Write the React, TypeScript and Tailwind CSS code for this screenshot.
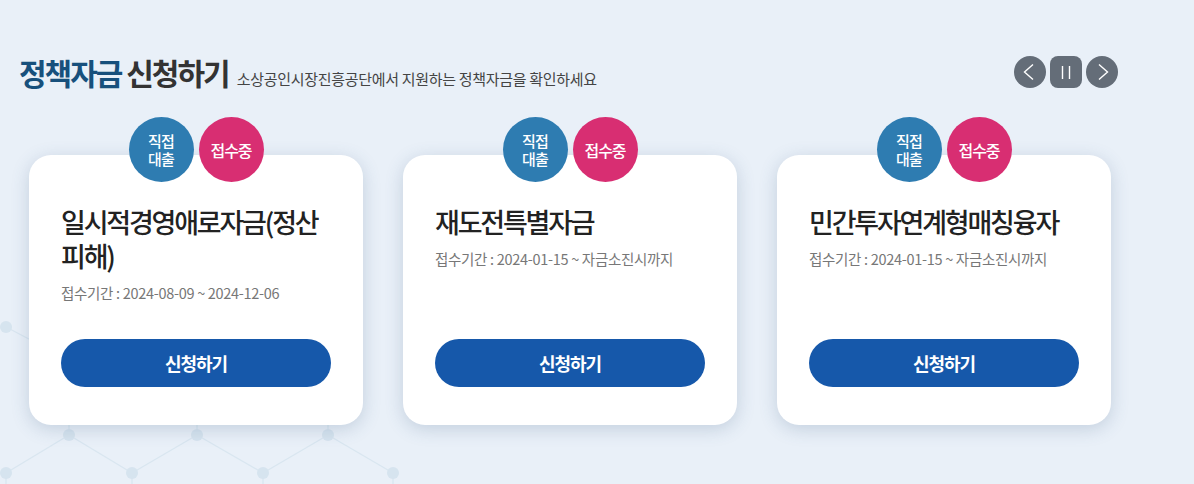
import React from "react";

type Fund = { title: React.ReactNode; period: string };

const funds: Fund[] = [
  {
    title: (
      <>
        일시적경영애로자금(정산
        <br />
        피해)
      </>
    ),
    period: "접수기간 : 2024-08-09 ~ 2024-12-06",
  },
  { title: "재도전특별자금", period: "접수기간 : 2024-01-15 ~ 자금소진시까지" },
  { title: "민간투자연계형매칭융자", period: "접수기간 : 2024-01-15 ~ 자금소진시까지" },
];

function Network() {
  const nodes: [number, number][] = [
    [6, 327],
    [69, 435],
    [197, 435],
    [328, 435],
    [6, 473],
    [132, 473],
    [263, 473],
    [393, 473],
  ];
  const lines: [number, number, number, number][] = [
    [6, 327, 69, 360],
    [69, 435, 69, 420],
    [197, 435, 197, 420],
    [328, 435, 328, 420],
    [69, 435, 6, 473],
    [69, 435, 132, 473],
    [197, 435, 132, 473],
    [197, 435, 263, 473],
    [328, 435, 263, 473],
    [328, 435, 393, 473],
    [132, 473, 132, 490],
    [393, 473, 393, 490],
    [6, 473, 6, 490],
    [263, 473, 263, 490],
  ];
  return (
    <svg
      className="absolute left-0 top-0 pointer-events-none"
      width="1194"
      height="484"
      viewBox="0 0 1194 484"
    >
      {lines.map((l, i) => (
        <line key={i} x1={l[0]} y1={l[1]} x2={l[2]} y2={l[3]} stroke="#d9e6f0" strokeWidth="1.3" />
      ))}
      {nodes.map((n, i) => (
        <circle key={i} cx={n[0]} cy={n[1]} r="6" fill="#d6e4ef" />
      ))}
    </svg>
  );
}

function Card({ fund }: { fund: Fund }) {
  return (
    <div className="relative w-[334px] h-[270px] shrink-0 bg-white rounded-[22px] shadow-[0_4px_18px_rgba(60,90,130,0.22)] flex flex-col pt-[50px] pb-[38px] px-[32px]">
      <div className="absolute top-[-38px] left-0 right-0 flex justify-center gap-[5px]">
        <div className="w-[65px] h-[65px] rounded-full bg-[#2e7cb1] text-white flex flex-col items-center justify-center text-center text-[15px] leading-[18px] tracking-[-0.8px] font-medium">
          <span>직접</span>
          <span>대출</span>
        </div>
        <div className="w-[65px] h-[65px] rounded-full bg-[#d82e72] text-white flex items-center justify-center text-[16px] leading-[18px] tracking-[-1px] font-medium">
          접수중
        </div>
      </div>
      <div className="text-[27px] leading-[34px] font-medium text-[#222] tracking-[-2.2px] whitespace-nowrap">
        {fund.title}
      </div>
      <div className="mt-[9px] text-[14.5px] leading-[22px] text-[#777] tracking-[-0.3px]">
        {fund.period}
      </div>
      <button className="mt-auto h-[48px] w-full rounded-full bg-[#1658aa] text-white text-[18px] font-bold tracking-[-1px]">
        신청하기
      </button>
    </div>
  );
}

export default function App() {
  return (
    <div
      className="relative w-[1194px] h-[484px] overflow-hidden bg-[#e9f0f8]"
      style={{ fontFamily: '"Noto Sans CJK KR", "Noto Sans", sans-serif' }}
    >
      <Network />
      <div className="relative">
        <div className="flex items-center justify-between pt-[52px] pl-[19px] pr-[76px] h-[92px]">
          <div className="flex items-baseline">
            <h2 className="text-[30px] leading-[40px] font-bold tracking-[-2px]">
              <span className="text-[#17507c]">정책자금</span>{" "}
              <span className="text-[#333]">신청하기</span>
            </h2>
            <p className="ml-[8px] text-[15px] text-[#444] tracking-[-0.3px]">
              소상공인시장진흥공단에서 지원하는 정책자금을 확인하세요
            </p>
          </div>
          <div className="flex gap-[4px]">
            <button className="w-[32px] h-[32px] rounded-full bg-[#646d78] flex items-center justify-center">
              <svg width="32" height="32" viewBox="0 0 32 32">
                <polyline points="19,8.5 10.5,16 19,23.5" fill="none" stroke="#fff" strokeWidth="1.4" />
              </svg>
            </button>
            <button className="w-[32px] h-[32px] rounded-[8px] bg-[#646d78] flex items-center justify-center">
              <svg width="32" height="32" viewBox="0 0 32 32">
                <line x1="12.5" y1="10" x2="12.5" y2="23" stroke="#fff" strokeWidth="1.4" />
                <line x1="19.5" y1="10" x2="19.5" y2="23" stroke="#fff" strokeWidth="1.4" />
              </svg>
            </button>
            <button className="w-[32px] h-[32px] rounded-full bg-[#646d78] flex items-center justify-center">
              <svg width="32" height="32" viewBox="0 0 32 32">
                <polyline points="13,8.5 21.5,16 13,23.5" fill="none" stroke="#fff" strokeWidth="1.4" />
              </svg>
            </button>
          </div>
        </div>
        <div className="flex gap-[40px] pl-[29px] mt-[63px]">
          {funds.map((f, i) => (
            <Card key={i} fund={f} />
          ))}
        </div>
      </div>
    </div>
  );
}
